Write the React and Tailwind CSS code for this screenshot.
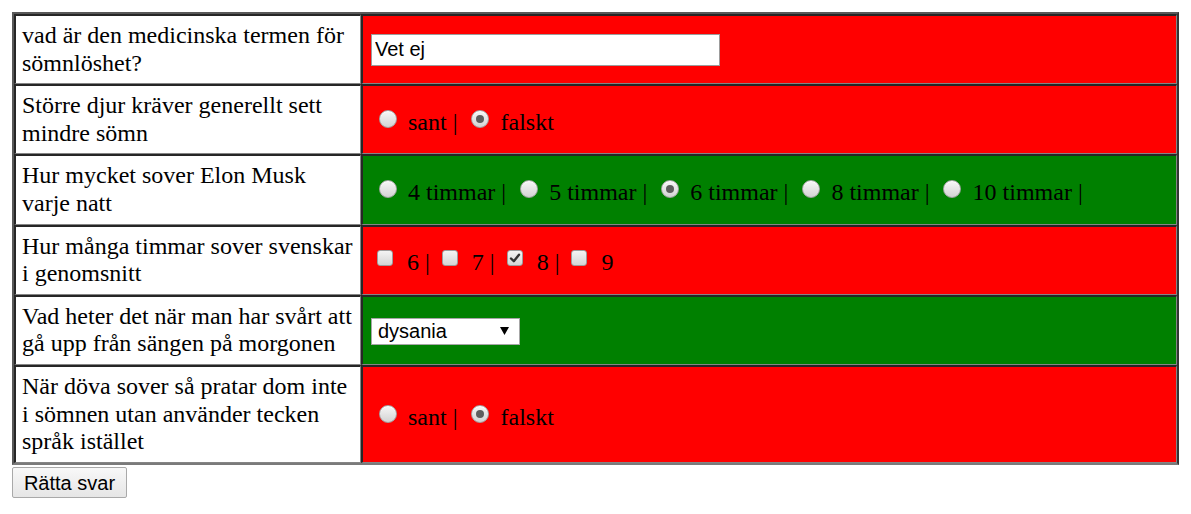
const RED = "bg-[#ff0000]";
const GREEN = "bg-[#008000]";

function Radio({ checked }) {
  return (
    <span className="relative inline-block w-[18px] h-[18px] ml-[7.5px] mr-[5.5px] mb-[2px] align-baseline rounded-full border border-[#a3a3a3] bg-linear-to-b from-[#f7f7f7] to-[#d3d3d3] shadow-[inset_0_1px_0_#ffffff]">
      {checked && (
        <span className="absolute left-[4px] top-[4px] w-[8px] h-[8px] rounded-full bg-[#5e5e5e]" />
      )}
    </span>
  );
}

function Checkbox({ checked }) {
  return (
    <span className="relative inline-block w-[16px] h-[16px] ml-[6px] mr-[8px] mb-[4px] align-baseline rounded-[3px] border border-[#9d9d9d] bg-linear-to-b from-[#f4f4f4] to-[#d5d5d5]">
      {checked && (
        <svg className="absolute left-[1px] top-[1px]" width="12" height="12" viewBox="0 0 12 12">
          <path d="M2 6.5 L4.8 9.2 L10 2.8" fill="none" stroke="#333" strokeWidth="2.4" strokeLinecap="round" strokeLinejoin="round" />
        </svg>
      )}
    </span>
  );
}

function RadioGroup({ options, checked, trailing }) {
  return (
    <>
      {options.map((o, i) => (
        <span key={o}>
          <Radio checked={i === checked} />{" "}
          {o}
          {(i < options.length - 1 || trailing) && " | "}
        </span>
      ))}
    </>
  );
}

const rows = [
  {
    q: ["vad är den medicinska termen för", "sömnlöshet?"],
    bg: RED,
    a: (
      <input
        type="text"
        value="Vet ej"
        readOnly
        className="w-[349px] h-[32px] align-middle border border-[#9c9c9c] bg-white px-[3px] font-['Liberation_Sans',Arial,sans-serif] text-[20px] text-black outline-none"
      />
    ),
  },
  {
    q: ["Större djur kräver generellt sett", "mindre sömn"],
    bg: RED,
    low: true,
    a: <RadioGroup options={["sant", "falskt"]} checked={1} />,
  },
  {
    q: ["Hur mycket sover Elon Musk", "varje natt"],
    bg: GREEN,
    low: true,
    a: (
      <RadioGroup
        options={["4 timmar", "5 timmar", "6 timmar", "8 timmar", "10 timmar"]}
        checked={2}
        trailing
      />
    ),
  },
  {
    q: ["Hur många timmar sover svenskar", "i genomsnitt"],
    bg: RED,
    low: true,
    a: (
      <>
        <Checkbox /> 6 | <Checkbox /> 7 | <Checkbox checked /> 8 | <Checkbox /> 9
      </>
    ),
  },
  {
    q: ["Vad heter det när man har svårt att", "gå upp från sängen på morgonen"],
    bg: GREEN,
    a: (
      <span className="relative inline-block align-middle">
        <select
          defaultValue="dysania"
          className="appearance-none block w-[149px] h-[27px] border border-[#a6a6a6] bg-white pl-[6px] font-['Liberation_Sans',Arial,sans-serif] text-[20px] leading-[25px] text-black outline-none"
        >
          <option value="dysania">dysania</option>
        </select>
        <svg className="absolute right-[11px] top-[9px] pointer-events-none" width="9" height="8" viewBox="0 0 9 8">
          <polygon points="0,0 9,0 4.5,8" fill="#000" />
        </svg>
      </span>
    ),
  },
  {
    q: ["När döva sover så pratar dom inte", "i sömnen utan använder tecken", "språk istället"],
    bg: RED,
    low: true,
    a: <RadioGroup options={["sant", "falskt"]} checked={1} />,
  },
];

export default function App() {
  return (
    <div className="p-3 bg-white min-h-screen">
      <table className="table-fixed border-separate border-spacing-0 w-[1167px] border-2 border-t-[#595959] border-l-[#595959] border-r-[#333333] border-b-[#7a7a7a] font-['Liberation_Serif','Times_New_Roman',serif] text-[24px] leading-[27.6px] text-black">
        <tbody>
          {rows.map((r, i) => (
            <tr key={i}>
              <td className="w-[347px] bg-white align-middle whitespace-nowrap border-t-2 border-l-2 border-b border-r border-t-[#262626] border-l-[#262626] border-b-[#858585] border-r-[#858585] pl-[6px] pr-[5px] py-[6px]">
                {r.q.map((line, j) => (
                  <span key={j}>
                    {j > 0 && <br />}
                    {line}
                  </span>
                ))}
              </td>
              <td
                className={`${r.bg} align-middle whitespace-nowrap border-t-2 border-l-2 border-b border-r border-t-[#262626] border-l-[#262626] border-b-[#858585] border-r-[#858585] pl-[8px] pr-[6px] ${
                  r.low ? "pt-[9px] pb-[3px]" : "py-[6px]"
                }`}
              >
                {r.a}
              </td>
            </tr>
          ))}
        </tbody>
      </table>
      <button className="block mt-[2px] w-[115px] h-[31px] rounded-[2px] border border-[#a9a9a9] bg-linear-to-b from-[#f8f8f8] to-[#e6e6e6] font-['Liberation_Sans',Arial,sans-serif] text-[20px] text-black">
        Rätta svar
      </button>
    </div>
  );
}
